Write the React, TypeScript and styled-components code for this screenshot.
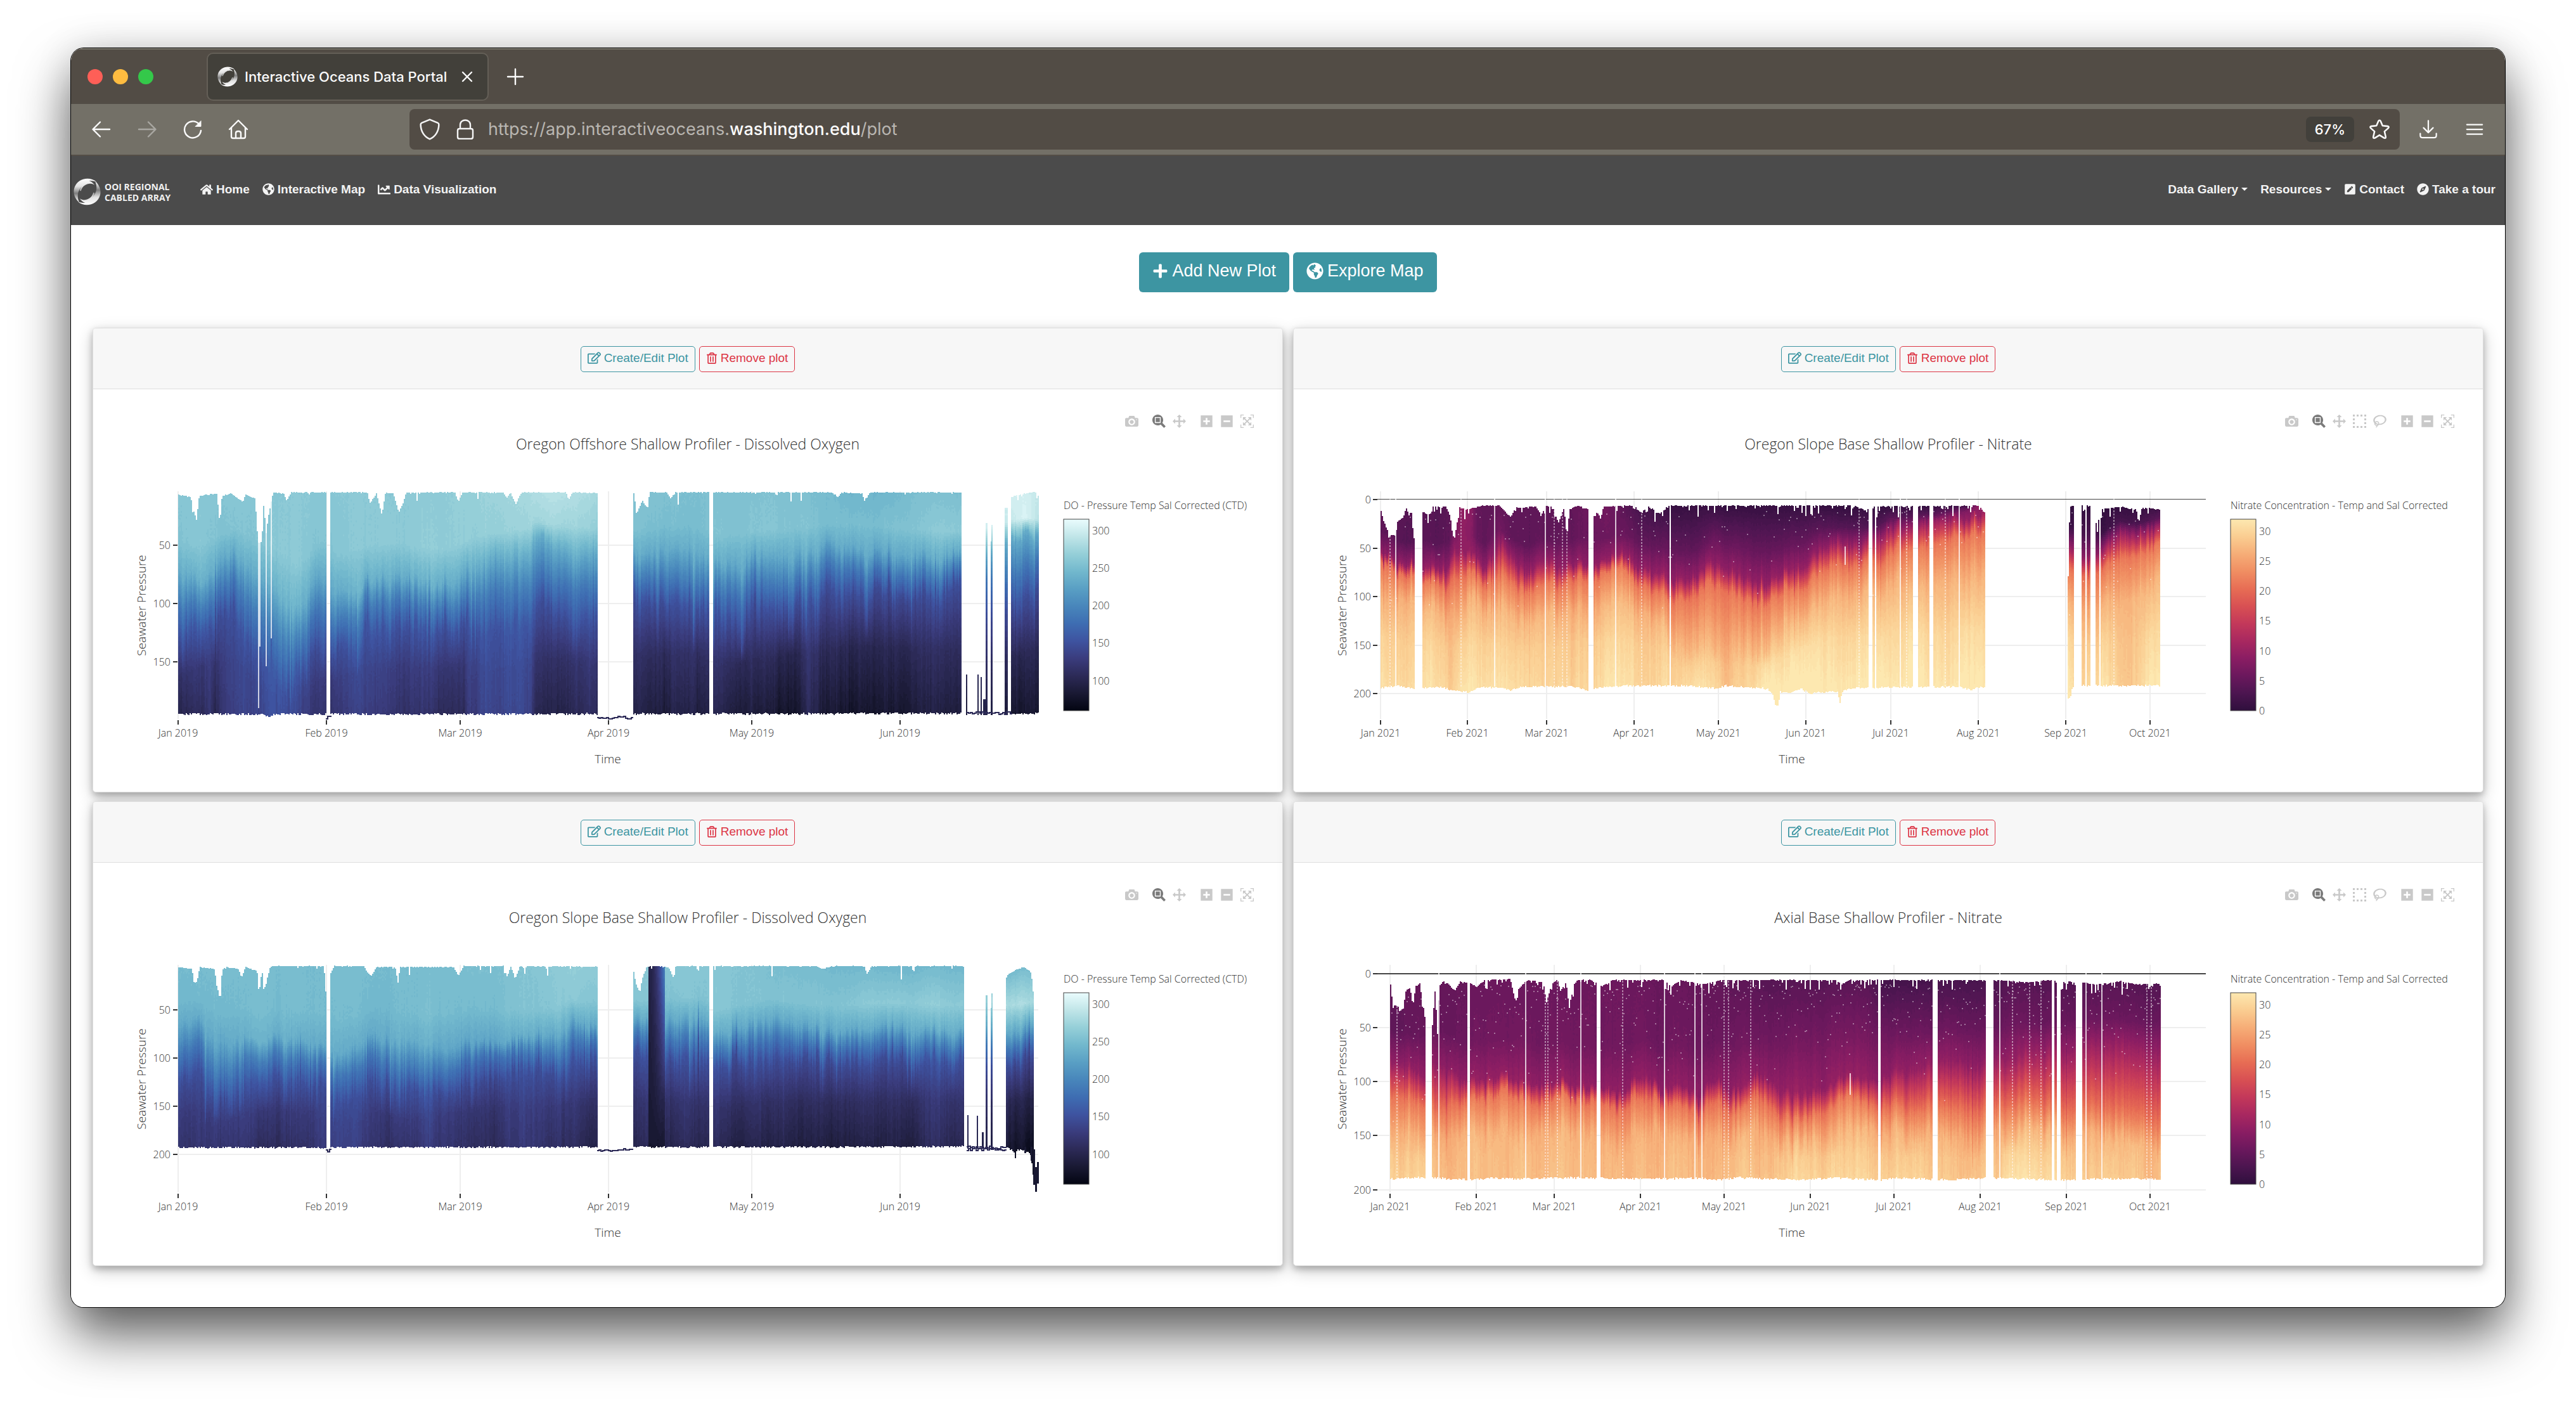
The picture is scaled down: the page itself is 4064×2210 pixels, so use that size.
import React from "react";
import styled, { createGlobalStyle, css } from "styled-components";
import {
  FaChartLine,
  FaCompass,
  FaGlobeAmericas,
  FaHome,
  FaPenSquare,
  FaPlus,
  FaRegEdit,
  FaRegTrashAlt,
} from "react-icons/fa";

/* ------------------------------------------------------------------ */
/* Global                                                              */
/* ------------------------------------------------------------------ */

const GlobalStyle = createGlobalStyle`
  *, *::before, *::after { box-sizing: border-box; }
  body { margin: 0; background: #fff; }
  button, input { font: inherit; color: inherit; }
  svg { display: block; flex: none; }
`;

const SYSTEM = `Inter, "Liberation Sans", sans-serif`;
const HELVETICA = `"Liberation Sans", Arial, sans-serif`;
const OPEN_SANS = `"Open Sans", "Noto Sans", sans-serif`;

/* ------------------------------------------------------------------ */
/* Browser window                                                      */
/* ------------------------------------------------------------------ */

const Desktop = styled.div`
  min-height: 100vh;
  padding: 76px 112px 148px;
  overflow: hidden;
`;

const Window = styled.div`
  position: relative;
  border-radius: 20px;
  overflow: hidden;
  background: #fff;
`;

const WindowShadow = styled.div`
  border-radius: 20px;
  box-shadow:
    0 0 0 1px #000,
    0 0 60px rgba(0, 0, 0, 0.12),
    0 44px 84px rgba(0, 0, 0, 0.62);
`;

const TabStrip = styled.div`
  display: flex;
  align-items: center;
  height: 88px;
  padding-left: 26px;
  background: #524c45;
  border-top: 2px solid #7d7a70;
`;

const Lights = styled.div`
  display: flex;
  gap: 16px;
  margin-right: 84px;
`;

const Light = styled.button<{ $color: string }>`
  width: 24px;
  height: 24px;
  padding: 0;
  border: 0;
  border-radius: 50%;
  background: ${(p) => p.$color};
`;

const Tab = styled.div`
  display: flex;
  align-items: center;
  height: 76px;
  width: 445px;
  padding: 0 16px 0 15px;
  gap: 11px;
  border: 2px solid #645f57;
  border-radius: 10px;
  background: #42403a;
  color: #fbfbfb;
  font: 500 22px/32px ${SYSTEM};
`;

const TabTitle = styled.span`
  flex: 1;
  white-space: nowrap;
`;

const BareButton = styled.button`
  display: flex;
  padding: 0;
  border: 0;
  background: none;
  color: #fbfbfb;
`;

const NewTab = styled(BareButton)`
  margin-left: 26px;
`;

const Toolbar = styled.div`
  display: flex;
  align-items: center;
  height: 82px;
  padding: 0 33px 0 32px;
  background: #737067;
  border-bottom: 2px solid #544e46;
`;

const NavButtons = styled.div`
  display: flex;
  gap: 40px;
  margin-right: 254px;
`;

const AddressBar = styled.div`
  display: flex;
  align-items: center;
  flex: 1;
  height: 64px;
  padding: 0 15px;
  border-radius: 8px;
  background: #524c45;
  color: #f4f4f4;
`;

const AddressIcons = styled.div`
  display: flex;
  align-items: center;
  gap: 23px;
  margin-right: 20px;
`;

const Url = styled.div`
  flex: 1;
  color: #b9b6b1;
  font: 400 27px/36px ${SYSTEM};
  white-space: nowrap;

  strong {
    color: #fbfbfb;
    font-weight: 500;
  }
`;

const ZoomBadge = styled.button`
  height: 40px;
  padding: 0 14px;
  margin-right: 23px;
  border: 0;
  border-radius: 8px;
  background: #42403b;
  color: #fff;
  font: 500 22px/40px ${SYSTEM};
`;

const ToolbarEnd = styled.div`
  display: flex;
  align-items: center;
  gap: 43px;
  margin-left: 30px;
`;

/* ------------------------------------------------------------------ */
/* Site navigation                                                     */
/* ------------------------------------------------------------------ */

const SiteNav = styled.nav`
  display: flex;
  align-items: center;
  height: 109px;
  padding: 0 15px 0 4px;
  background: #4b4b4b;
`;

const Brand = styled.a`
  display: flex;
  align-items: center;
  gap: 6px;
  width: 200px;
  padding-top: 4px;
  color: #f0f0f0;
  text-decoration: none;
  font: 700 14px/17px ${OPEN_SANS};
`;

const BrandName = styled.span`
  white-space: nowrap;
`;

const NavGroup = styled.div<{ $end?: boolean }>`
  display: flex;
  gap: 20px;
  padding-bottom: 4px;
  ${(p) => p.$end && "margin-left: auto;"}
`;

const navItem = css`
  display: flex;
  align-items: center;
  gap: 5px;
  padding: 0;
  border: 0;
  background: none;
  color: #f3f3f3;
  text-decoration: none;
  white-space: nowrap;
  font: 700 19px/28px ${HELVETICA};
`;

const NavLink = styled.a`
  ${navItem}
`;

const NavToggle = styled.button`
  ${navItem}

  &::after {
    content: "";
    border-top: 5px solid currentColor;
    border-left: 5px solid transparent;
    border-right: 5px solid transparent;
  }
`;

/* ------------------------------------------------------------------ */
/* Page                                                                */
/* ------------------------------------------------------------------ */

const Page = styled.main`
  padding: 43px 34px 65px;
`;

const Actions = styled.div`
  display: flex;
  justify-content: center;
  gap: 6px;
  margin-bottom: 56px;
`;

const PrimaryButton = styled.button`
  display: flex;
  align-items: center;
  gap: 6px;
  padding: 13px 21px 18px;
  border: 0;
  border-radius: 6px;
  background: #3d95a2;
  color: #fff;
  font: 400 27px/32px ${HELVETICA};
`;

const Grid = styled.div`
  display: grid;
  grid-template-columns: repeat(2, minmax(0, 1fr));
  gap: 14px 16px;
`;

const Card = styled.section`
  border: 1px solid #dfdfdf;
  border-radius: 5px;
  background: #fff;
  box-shadow:
    0 5px 11px rgba(0, 0, 0, 0.24),
    0 8px 27px rgba(0, 0, 0, 0.2);
`;

const CardHeader = styled.header`
  display: flex;
  justify-content: center;
  gap: 6px;
  padding: 28px 0 26px;
  border-bottom: 1px solid #dfdfdf;
  border-radius: 4px 4px 0 0;
  background: #f7f7f7;
`;

const OutlineButton = styled.button<{ $tone: string }>`
  display: flex;
  align-items: center;
  gap: 5px;
  padding: 4px 10px 8px;
  border: 1px solid ${(p) => p.$tone};
  border-radius: 5px;
  background: transparent;
  color: ${(p) => p.$tone};
  font: 400 19px/27px ${HELVETICA};
`;

const CardBody = styled.div`
  position: relative;
`;

const ModeBar = styled.div`
  position: absolute;
  top: 40px;
  right: 45px;
  display: flex;
  gap: 22px;
`;

const ModeGroup = styled.div`
  display: flex;
  gap: 11px;
`;

const ModeButton = styled.button<{ $active?: boolean }>`
  display: flex;
  padding: 0;
  border: 0;
  background: none;
  color: ${(p) => (p.$active ? "#7b7b7b" : "#c9c9c9")};
`;

const ChartSvg = styled.svg`
  width: 100%;
  height: auto;
  font-family: ${OPEN_SANS};
  font-weight: 300;
  fill: #333;
`;

const ChartTitle = styled.text`
  font-size: 23px;
  text-anchor: middle;
`;

const AxisTitle = styled.text`
  font-size: 19px;
  text-anchor: middle;
`;

const TickLabel = styled.text<{ $anchor: string }>`
  font-size: 16px;
  text-anchor: ${(p) => p.$anchor};
`;

/* ------------------------------------------------------------------ */
/* Icons                                                               */
/* ------------------------------------------------------------------ */

const lineIcon = {
  fill: "none",
  stroke: "currentColor",
  strokeWidth: 2.4,
  strokeLinecap: "round" as const,
  strokeLinejoin: "round" as const,
};

function Line({ size, d, dim }: { size: number; d: string; dim?: boolean }) {
  return (
    <svg width={size} height={size} viewBox="0 0 32 32" opacity={dim ? 0.4 : 1} {...lineIcon}>
      <path d={d} />
    </svg>
  );
}

const ICON = {
  close: "M9 9L23 23M23 9L9 23",
  plus: "M16 4V28M4 16H28",
  back: "M29 16H3M14 4.5L2.5 16L14 27.5",
  forward: "M3 16H29M18 4.5L29.5 16L18 27.5",
  home: "M2 16L16 2L30 16M5 13.5V27.5Q5 30 7.5 30H24.5Q27 30 27 27.5V13.5M12 30V22Q12 19 16 19Q20 19 20 22V30",
  shield: "M16 1.5L28 6.5Q29.5 7 29.5 9C29.5 19 24 27 16 30.5C8 27 2.5 19 2.5 9Q2.5 7 4 6.5Z",
  lock: "M7 15H25Q28 15 28 18V28Q28 31 25 31H7Q4 31 4 28V18Q4 15 7 15ZM8 15V9C8 -1 24 -1 24 9V15",
  star: "M16 2.5Q17 2.5 17.6 3.8L20.5 10.6L28 11.4Q31 12 29 14.2L23.4 19.2L25.2 27Q25.6 30 22.8 28.8L16 24.6L9.2 28.8Q6.4 30 6.8 27L8.6 19.2L3 14.2Q1 12 4 11.4L11.5 10.6L14.4 3.8Q15 2.5 16 2.5Z",
  download: "M16 1.5V21M8 13.5L16 21.5L24 13.5M2.5 23V26Q2.5 30 6.5 30H25.5Q29.5 30 29.5 26V23",
  menu: "M3 8H29M3 16H29M3 24H29",
};

function Reload() {
  return (
    <svg width={32} height={32} viewBox="0 0 32 32" {...lineIcon}>
      <path d="M26 8A13 13 0 1 0 29 18" />
      <path d="M29 3V11.5H20.5Z" fill="currentColor" strokeWidth={1} />
    </svg>
  );
}

function RingMark({ size, id }: { size: number; id: string }) {
  const crescent = "M37 6C25 -4 5 1 1 17C-1 26 3 34 9 39C6 31 6 24 10 18C15 9 26 6 34 11C31 7 28 5 25 4C30 4 34 5 37 6Z";
  return (
    <svg width={size} height={size} viewBox="0 0 44 44">
      <defs>
        <linearGradient id={id} gradientUnits="userSpaceOnUse" x1="0" y1="0" x2="0" y2="38">
          <stop offset="0" stopColor="#fff" />
          <stop offset="0.35" stopColor="#e2e2e2" />
          <stop offset="0.65" stopColor="#7c7c7c" />
          <stop offset="1" stopColor="#fff" />
        </linearGradient>
      </defs>
      <g fill={`url(#${id})`}>
        <path d={crescent} />
        <path d={crescent} transform="rotate(180 22 22)" />
        <path d="M10 20C12 11 20 7 27 9C20 9 14 13 12 21Z" />
        <path d="M10 20C12 11 20 7 27 9C20 9 14 13 12 21Z" transform="rotate(180 22 22)" />
      </g>
    </svg>
  );
}

const MODE_PATHS: Record<string, { w: number; d: string }> = {
  camera: {
    w: 1000,
    d: "m500 450c-83 0-150-67-150-150 0-83 67-150 150-150 83 0 150 67 150 150 0 83-67 150-150 150z m400 150h-120c-16 0-34 13-39 29l-31 93c-6 15-23 28-40 28h-340c-16 0-34-13-39-28l-31-94c-6-15-23-28-40-28h-120c-55 0-100-45-100-100v-450c0-55 45-100 100-100h800c55 0 100 45 100 100v450c0 55-45 100-100 100z m-400-550c-138 0-250 112-250 250 0 138 112 250 250 250 138 0 250-112 250-250 0-138-112-250-250-250z m365 380c-19 0-35 16-35 35 0 19 16 35 35 35 19 0 35-16 35-35 0-19-16-35-35-35z",
  },
  zoom: {
    w: 1000,
    d: "m1000-25l-250 251c40 63 63 138 63 218 0 224-182 406-407 406-224 0-406-182-406-406s183-406 407-406c80 0 155 22 218 62l250-250 125 125z m-812 250l0 438 437 0 0-438-437 0z m62 375l313 0 0-312-313 0 0 312z",
  },
  pan: {
    w: 1000,
    d: "m1000 350l-187 188 0-125-250 0 0 250 125 0-188 187-187-187 125 0 0-250-250 0 0 125-188-188 186-187 0 125 252 0 0-250-125 0 187-188 188 188-125 0 0 250 250 0 0-126 187 188z",
  },
  select: {
    w: 1000,
    d: "m0 850l0-143 143 0 0 143-143 0z m286 0l0-143 143 0 0 143-143 0z m285 0l0-143 143 0 0 143-143 0z m286 0l0-143 143 0 0 143-143 0z m-857-286l0-143 143 0 0 143-143 0z m857 0l0-143 143 0 0 143-143 0z m-857-285l0-143 143 0 0 143-143 0z m857 0l0-143 143 0 0 143-143 0z m-857-286l0-143 143 0 0 143-143 0z m286 0l0-143 143 0 0 143-143 0z m285 0l0-143 143 0 0 143-143 0z m286 0l0-143 143 0 0 143-143 0z",
  },
  lasso: {
    w: 1031,
    d: "m1018 538c-36 207-290 336-568 286-277-48-473-256-436-463 10-57 36-108 76-151-13-66 11-137 68-183 34-28 75-41 114-42l-55-70 0 0c-2-1-3-2-4-3-10-14-8-34 5-45 14-11 34-8 45 4 1 1 2 3 2 5l0 0 113 140c16 11 31 24 45 40 4 3 6 7 8 11 48-3 100 0 151 9 278 48 473 255 436 462z m-624-379c-80 14-149 48-197 96 42 42 109 47 156 9 33-26 47-66 41-105z m-187-74c-19 16-33 37-39 60 50-32 109-55 174-68-42-25-95-24-135 8z m360 75c-34-7-69-9-102-8 8 62-16 128-68 170-73 59-175 54-244-5-9 20-16 40-20 61-28 159 121 317 333 354s407-60 434-217c28-159-121-318-333-355z",
  },
  plus: {
    w: 875,
    d: "m1 787l0-875 875 0 0 875-875 0z m687-500l-187 0 0-187-125 0 0 187-188 0 0 125 188 0 0 187 125 0 0-187 187 0 0-125z",
  },
  minus: { w: 875, d: "m0 788l0-876 875 0 0 876-875 0z m688-500l-500 0 0 125 500 0 0-125z" },
  autoscale: {
    w: 1000,
    d: "m250 850l-187 0-63 0 0-62 0-188 63 0 0 188 187 0 0 62z m688 0l-188 0 0-62 188 0 0-188 62 0 0 188 0 62-62 0z m-875-938l0 188-63 0 0-188 0-62 63 0 187 0 0 62-187 0z m875 188l0-188-188 0 0-62 188 0 62 0 0 62 0 188-62 0z m-125 188l-1 0-93-94-156 156 156 156 92-93 2 0 0 250-250 0 0-2 93-92-156-156-156 156 94 92 0 2-250 0 0-250 0 0 93 93 157-156-157-156-93 94 0 0 0-250 250 0 0 0-94 93 156 157 156-157-93-93 0 0 250 0 0 250z",
  },
};

function ModeIcon({ name, label }: { name: string; label: string }) {
  const icon = MODE_PATHS[name];
  return (
    <ModeButton type="button" aria-label={label} $active={name === "zoom"}>
      <svg width={21} height={21} viewBox={`0 0 ${icon.w} 1000`} fill="currentColor">
        <path transform="matrix(1 0 0 -1 0 850)" d={icon.d} />
      </svg>
    </ModeButton>
  );
}

/* ------------------------------------------------------------------ */
/* Depth sections                                                      */
/* ------------------------------------------------------------------ */

type RGB = [number, number, number];

const ICE: RGB[] = [
  [3, 5, 18], [25, 25, 51], [44, 42, 87], [58, 60, 125], [62, 83, 160], [62, 109, 178],
  [72, 134, 187], [89, 159, 196], [114, 184, 205], [149, 207, 216], [192, 229, 232], [234, 252, 253],
];
const MATTER: RGB[] = [
  [47, 15, 61], [76, 21, 80], [107, 24, 93], [138, 29, 99], [168, 40, 96], [195, 56, 90],
  [216, 80, 83], [231, 109, 84], [240, 142, 98], [246, 173, 119], [250, 205, 145], [253, 232, 176],
];

/** day, near-surface value, mixed-layer value, three isoline pressures, value at depth */
type Key = number[];

interface Section {
  title: string;
  seed: number;
  ramp: RGB[];
  jitter: number;
  ragged: number;
  speckle: number;
  surface: number;
  floor: number;
  lastDay: number;
  levels: [number, number, number];
  keys: Key[];
  tops: [number, number][];
  bottoms: [number, number][];
  gaps: [number, number][];
  cuts: number[];
  dotted?: number[];
  scars?: [number, number, number][];
  spikes?: [number, number, number][];
  trace?: [number, number, number][];
  stripe?: [number, number, number, number];
  tail?: string;
  x0: number;
  perDay: number;
  y0: number;
  perBar: number;
  left: number;
  right: number;
  yTicks: number[];
  months: [string, number][];
  zeroLine?: number;
  timeX: number;
  barX: number;
  barTitle: string;
  barTicks: [string, number][];
  tools: string[][];
}

function rng(seed: number) {
  let s = seed;
  return () => {
    s = (s * 1664525 + 1013904223) % 4294967296;
    return s / 4294967296;
  };
}

function mix(ramp: RGB[], t: number) {
  const f = Math.max(0, Math.min(1, t)) * (ramp.length - 1);
  const i = Math.min(ramp.length - 2, Math.floor(f));
  const k = f - i;
  const c = ramp[i].map((v, n) => Math.round(v + (ramp[i + 1][n] - v) * k));
  return `rgb(${c.join(",")})`;
}

function at(points: number[][], x: number, col = 1) {
  if (x <= points[0][0]) return points[0][col];
  for (let i = 1; i < points.length; i++) {
    if (x <= points[i][0]) {
      const a = points[i - 1];
      const b = points[i];
      return a[col] + ((b[col] - a[col]) * (x - a[0])) / (b[0] - a[0] || 1);
    }
  }
  return points[points.length - 1][col];
}

const SHADES = 56;
const COL = 2;
const CELL = 3;

function buildSection(s: Section) {
  const rand = rng(s.seed);
  const gauss = () => rand() + rand() + rand() - 1.5;
  const paths: string[] = Array.from({ length: SHADES }, () => "");
  const specks: string[] = [];
  const px = (day: number) => s.x0 + day * s.perDay;
  const py = (p: number) => s.y0 + p * s.perBar;

  const column = (x: number, width: number, top: number, bottom: number, shift: number, lift: number) => {
    const day = (x - s.x0) / s.perDay;
    const [, n, m, a, b, c, d] = [0, 1, 2, 3, 4, 5, 6].map((k) => at(s.keys, day, k));
    const mid = c + (s.floor - c) * 0.45;
    const curve = [
      [s.surface, n],
      [a * 0.62, m],
      [a + shift * 0.8, s.levels[0]],
      [b + shift, s.levels[1]],
      [c + shift * 1.4, s.levels[2]],
      [Math.max(mid, c + shift * 1.4 + 8), s.levels[2] + (d - s.levels[2]) * 0.65],
      [s.floor, d],
    ];
    let runStart = Math.round(py(top));
    const end = Math.round(py(bottom));
    let shade = -1;
    for (let y = runStart; y < end; y += CELL) {
      const p = (y - s.y0) / s.perBar;
      const depthWeight = Math.min(1, p / s.floor + 0.1);
      let t = at(curve, p) + lift * depthWeight + (rand() - 0.5) * 0.008;
      if (s.stripe && day > s.stripe[0] && day < s.stripe[1]) {
        const k = (day - s.stripe[0]) / (s.stripe[1] - s.stripe[0]);
        const cap = s.stripe[2] + (s.stripe[3] - s.stripe[2]) * k * k;
        t = Math.min(t - 0.08, cap - (p / s.floor) * (cap - 0.08));
      }
      const next = Math.max(0, Math.min(SHADES - 1, Math.round(t * (SHADES - 1))));
      if (next !== shade) {
        if (shade >= 0) paths[shade] += `M${x} ${runStart}h${width}V${y}h-${width}z`;
        shade = next;
        runStart = y;
      }
    }
    if (shade >= 0) paths[shade] += `M${x} ${runStart}h${width}V${end}h-${width}z`;
  };

  let slow = 0;
  let drift = 0;
  let fine = 0;
  let bump = 0;
  const startX = Math.round(px(0));
  const endX = Math.round(px(s.lastDay));
  for (let x = startX; x < endX; x += COL) {
    const day = (x - s.x0) / s.perDay;
    slow = slow * 0.92 + gauss() * 0.015;
    drift = drift * 0.9 + gauss() * s.jitter * 0.35;
    fine = fine * 0.4 + gauss() * s.jitter;
    bump = rand() < 0.09 ? (rand() - 0.45) * s.jitter * 3.5 : bump * 0.5;
    const drop = rand() < s.ragged ? rand() * rand() * 14 : 0;
    const inGap = s.gaps.some(([g0, g1]) => day >= g0 && day <= g1);
    const bottom = at(s.bottoms, day) + (rand() - 0.5) * 2;
    const top = at(s.tops, day) + drop + (rand() - 0.5) * 0.8;
    if (!inGap) column(x, COL, top, bottom, fine + drift + bump, slow + gauss() * 0.014);
    if (!inGap && rand() < s.speckle) {
      const sp = top + 4 + rand() * rand() * 110;
      specks.push(`M${x} ${Math.round(py(sp))}h2v2h-2z`);
    }
  }
  (s.spikes || []).forEach(([day, top, width]) => {
    column(Math.round(px(day)), width, top, s.floor + 1, 0, 0);
  });

  const traces = (s.trace || []).map(([from, to, p]) => {
    let d = "";
    for (let x = Math.round(px(from)); x < px(to); x += 3) {
      d += `${d ? "L" : "M"}${x} ${Math.round(py(p) + (rand() - 0.5) * 4)}h3`;
    }
    return d;
  });

  return { paths, specks: specks.join(""), traces };
}

const TOP = 161;
const BOTTOM = 520;
const BAR_TOP = 205;
const BAR_HEIGHT = 302;

function SectionChart({ s, id }: { s: Section; id: string }) {
  const built = React.useMemo(() => buildSection(s), [s]);
  const px = (day: number) => Math.round(s.x0 + day * s.perDay);
  const py = (p: number) => Math.round(s.y0 + p * s.perBar);
  return (
    <ChartSvg viewBox="0 0 1876 635" role="img" aria-label={s.title}>
      <defs>
        <linearGradient id={id} x1="0" y1="1" x2="0" y2="0">
          {s.ramp.map((c, i) => (
            <stop key={i} offset={i / (s.ramp.length - 1)} stopColor={`rgb(${c.join(",")})`} />
          ))}
        </linearGradient>
      </defs>
      <ChartTitle x={938} y={95}>
        {s.title}
      </ChartTitle>

      <g shapeRendering="crispEdges">
        {s.months.map(([m, day]) => (
          <rect key={m} x={px(day) - 1} y={TOP} width={2} height={BOTTOM - TOP} fill="#eee" />
        ))}
        {s.yTicks.filter((t) => t > 0).map((t) => (
          <rect key={t} x={s.left} y={py(t) - 1} width={s.right - s.left} height={2} fill="#eee" />
        ))}
        {s.zeroLine && (
          <rect x={s.left} y={py(0) - 1} width={s.right - s.left} height={s.zeroLine} fill="#444" />
        )}
        {built.paths.map((d, i) => (d ? <path key={i} d={d} fill={mix(s.ramp, i / (SHADES - 1))} /> : null))}
        {built.traces.map((d, i) => (
          <path key={i} d={d} fill="none" stroke="#2c2a57" strokeWidth={2} />
        ))}
        {s.tail && <path d={s.tail} fill="none" stroke="#191933" strokeWidth={3} />}
        {s.cuts.map((day) => (
          <rect key={day} x={px(day)} y={TOP + 10} width={2} height={py(s.floor) - TOP - 10} fill="#fff" fillOpacity={0.75} />
        ))}
        {(s.dotted || []).map((day) => (
          <path
            key={day}
            d={`M${px(day) + 1} ${TOP + 10}V${py(s.floor)}`}
            stroke="#fff"
            strokeOpacity={0.45}
            strokeWidth={2}
            strokeDasharray="3 2"
          />
        ))}
        {(s.scars || []).map(([day, from, to]) => (
          <rect key={day} x={px(day)} y={py(from)} width={2} height={py(to) - py(from)} fill="#fff" fillOpacity={0.75} />
        ))}
        <path d={built.specks} fill="#fff" fillOpacity={0.4} />
      </g>

      <g shapeRendering="crispEdges">
        {s.months.map(([m, day]) => (
          <rect key={m} x={px(day) - 1} y={522} width={2} height={7} />
        ))}
        {s.yTicks.map((t) => (
          <rect key={t} x={s.left - 7} y={py(t) - 1} width={7} height={2} />
        ))}
      </g>
      {s.months.map(([m, day]) => (
        <TickLabel key={m} $anchor="middle" x={px(day)} y={548}>
          {m}
        </TickLabel>
      ))}
      {s.yTicks.map((t) => (
        <TickLabel key={t} $anchor="end" x={122} y={py(t) + 6}>
          {t}
        </TickLabel>
      ))}
      <AxisTitle x={s.timeX} y={590}>
        Time
      </AxisTitle>
      <AxisTitle transform="translate(83 341) rotate(-90)">Seawater Pressure</AxisTitle>

      <TickLabel $anchor="start" x={s.barX} y={189}>
        {s.barTitle}
      </TickLabel>
      <rect x={s.barX} y={BAR_TOP} width={40} height={BAR_HEIGHT} fill={`url(#${id})`} stroke="#444" strokeWidth={1} />
      {s.barTicks.map(([label, y]) => (
        <TickLabel key={label} $anchor="start" x={s.barX + 45} y={y + 6}>
          {label}
        </TickLabel>
      ))}
    </ChartSvg>
  );
}

const OXYGEN = {
  ramp: ICE,
  jitter: 7,
  ragged: 0.06,
  speckle: 0,
  surface: 4,
  levels: [0.68, 0.5, 0.35] as [number, number, number],
  cuts: [] as number[],
  x0: 134,
  perDay: 7.54,
  left: 133,
  right: 1491,
  months: [
    ["Jan 2019", 0], ["Feb 2019", 31], ["Mar 2019", 59], ["Apr 2019", 90], ["May 2019", 120], ["Jun 2019", 151],
  ] as [string, number][],
  timeX: 812,
  barX: 1531,
  barTitle: "DO - Pressure Temp Sal Corrected (CTD)",
  barTicks: [["300", 223], ["250", 282], ["200", 341], ["150", 400], ["100", 460]] as [string, number][],
  tools: [["camera"], ["zoom", "pan"], ["plus", "minus", "autoscale"]],
};

const NITRATE = {
  ramp: MATTER,
  jitter: 6,
  ragged: 0.3,
  surface: 5,
  levels: [0.3, 0.66, 0.84] as [number, number, number],
  left: 132,
  right: 1439,
  months: [
    ["Jan 2021", 0], ["Feb 2021", 31], ["Mar 2021", 59], ["Apr 2021", 90], ["May 2021", 120],
    ["Jun 2021", 151], ["Jul 2021", 181], ["Aug 2021", 212], ["Sep 2021", 243], ["Oct 2021", 273],
  ] as [string, number][],
  timeX: 786,
  barX: 1478,
  barTitle: "Nitrate Concentration - Temp and Sal Corrected",
  barTicks: [
    ["30", 224], ["25", 271], ["20", 318], ["15", 365], ["10", 413], ["5", 460], ["0", 507],
  ] as [string, number][],
  tools: [["camera"], ["zoom", "pan", "select", "lasso"], ["plus", "minus", "autoscale"]],
};

const SECTIONS: Section[] = [
  {
    ...OXYGEN,
    title: "Oregon Offshore Shallow Profiler - Dissolved Oxygen",
    seed: 11,
    floor: 195,
    lastDay: 180,
    y0: 153.6,
    perBar: 1.841,
    yTicks: [50, 100, 150],
    keys: [
      [0, 0.78, 0.77, 75, 104, 135, 0.16], [5, 0.78, 0.77, 78, 98, 118, 0.14], [6.5, 0.78, 0.77, 72, 95, 118, 0.24],
      [7.5, 0.78, 0.77, 70, 92, 118, 0.14], [9, 0.78, 0.77, 62, 88, 112, 0.26], [12, 0.78, 0.77, 55, 78, 108, 0.28],
      [17, 0.78, 0.77, 75, 110, 150, 0.3], [20, 0.78, 0.77, 85, 120, 158, 0.3], [25, 0.79, 0.78, 105, 132, 158, 0.27],
      [30, 0.79, 0.78, 72, 102, 140, 0.25], [33, 0.79, 0.78, 92, 118, 142, 0.25], [38, 0.79, 0.78, 82, 100, 126, 0.25],
      [45, 0.79, 0.79, 75, 95, 120, 0.22], [55, 0.8, 0.8, 85, 104, 124, 0.17], [59.5, 0.82, 0.81, 75, 98, 118, 0.18],
      [61, 0.82, 0.81, 70, 95, 120, 0.26], [65, 0.83, 0.81, 64, 92, 128, 0.29], [72, 0.85, 0.82, 58, 86, 118, 0.27],
      [73.6, 0.86, 0.83, 56, 84, 116, 0.25], [74.2, 0.87, 0.83, 46, 76, 106, 0.15], [78, 0.9, 0.85, 52, 82, 108, 0.15],
      [83, 0.88, 0.84, 54, 78, 110, 0.17], [87, 0.86, 0.82, 57, 86, 116, 0.2], [95, 0.77, 0.76, 60, 80, 100, 0.14],
      [100, 0.77, 0.75, 54, 78, 100, 0.13], [107, 0.75, 0.74, 50, 78, 98, 0.12], [112, 0.76, 0.76, 62, 84, 106, 0.12],
      [116, 0.76, 0.77, 64, 88, 116, 0.14], [120, 0.77, 0.78, 60, 82, 108, 0.13], [125, 0.77, 0.78, 58, 84, 106, 0.1],
      [130, 0.76, 0.77, 54, 76, 96, 0.08], [132, 0.75, 0.76, 54, 76, 98, 0.15], [136, 0.74, 0.75, 50, 72, 96, 0.1],
      [140, 0.72, 0.75, 50, 68, 90, 0.08], [146, 0.72, 0.75, 52, 70, 88, 0.1], [150, 0.73, 0.77, 56, 74, 90, 0.11],
      [155, 0.76, 0.78, 58, 76, 94, 0.13], [160, 0.76, 0.8, 60, 76, 92, 0.12], [164, 0.75, 0.79, 60, 74, 90, 0.11],
      [169, 0.98, 0.94, 58, 78, 108, 0.14], [174, 0.96, 0.92, 46, 76, 105, 0.1], [177, 0.95, 0.97, 42, 72, 102, 0.09],
      [180, 0.92, 0.9, 44, 66, 92, 0.1],
    ],
    tops: [
      [0, 7], [2.5, 9], [3.7, 29], [4.3, 8], [8, 6], [8.5, 27], [9.1, 8], [11, 6], [13.4, 13], [14, 7], [16, 10],
      [16.6, 48], [17.4, 47], [17.8, 14], [18.3, 40], [18.8, 25], [19.4, 12], [19.8, 5], [22, 6], [22.6, 12], [23.5, 5],
      [39.5, 5], [40, 14], [41.4, 6], [42.5, 24], [43.3, 5], [45, 6], [46, 22], [47, 14], [47.6, 5], [57.8, 5],
      [58.5, 13], [59.4, 5], [68, 5], [68.6, 10], [69.4, 5], [70.5, 15], [71.7, 5], [81, 5], [81.6, 11], [82.4, 5],
      [95.3, 6], [95.8, 24], [97, 12], [98, 18], [98.6, 5], [102, 5], [103, 10], [104, 5], [136.7, 5], [138, 9],
      [138.8, 5], [143, 6], [143.5, 12], [144.6, 6], [145, 5], [164, 5], [174, 9], [176, 7], [178, 5], [180, 5],
    ],
    bottoms: [[0, 195], [17, 195], [19, 197.5], [20, 195], [180, 194.5]],
    gaps: [[30.9, 31.7], [87.7, 95], [110.9, 111.8], [163.9, 174.2]],
    scars: [[16.7, 48, 190], [17, 47, 137], [18.3, 30, 154], [19.3, 12, 130]],
    spikes: [
      [164.9, 161, 2], [167.3, 161, 2], [167.9, 163, 2], [168.4, 182, 4], [169, 31, 3], [170, 47, 3], [170.2, 33, 2],
      [173, 18, 5],
    ],
    trace: [[30.9, 31.8, 198], [87.7, 95, 198], [165, 174.2, 194]],
  },
  {
    ...NITRATE,
    title: "Oregon Slope Base Shallow Profiler - Nitrate",
    seed: 23,
    speckle: 0.35,
    floor: 193,
    lastDay: 276.7,
    x0: 136.5,
    perDay: 4.4487,
    y0: 174.4,
    perBar: 1.528,
    yTicks: [0, 50, 100, 150, 200],
    zeroLine: 1,
    keys: [
      [0, 0.14, 0.14, 53, 63, 100, 0.98], [4, 0.14, 0.14, 55, 64, 98, 0.97], [6, 0.13, 0.13, 66, 78, 105, 0.97],
      [11, 0.12, 0.12, 70, 82, 110, 0.96], [15, 0.13, 0.13, 66, 80, 106, 0.97], [20, 0.11, 0.12, 72, 86, 115, 0.95],
      [24, 0.14, 0.15, 68, 90, 122, 0.95], [26, 0.2, 0.22, 50, 78, 118, 0.96], [29, 0.3, 0.3, 50, 76, 112, 1],
      [32, 0.28, 0.26, 58, 78, 108, 1], [34, 0.16, 0.18, 64, 84, 110, 0.98], [37, 0.14, 0.15, 72, 90, 120, 0.97],
      [42, 0.16, 0.2, 46, 80, 115, 0.98], [46, 0.14, 0.15, 62, 90, 128, 0.95], [52, 0.14, 0.14, 76, 96, 130, 0.93],
      [57, 0.14, 0.15, 62, 86, 120, 0.92], [62, 0.14, 0.15, 68, 90, 122, 0.93], [66, 0.15, 0.16, 66, 84, 115, 0.95],
      [72, 0.18, 0.18, 60, 74, 108, 0.96], [80, 0.2, 0.18, 62, 74, 108, 0.97], [86, 0.13, 0.17, 56, 70, 106, 0.95],
      [92, 0.07, 0.15, 68, 85, 115, 0.94], [100, 0.03, 0.15, 75, 94, 125, 0.93], [107, 0.02, 0.15, 84, 105, 158, 0.93],
      [112, 0.03, 0.15, 80, 100, 150, 0.99], [118, 0.03, 0.18, 62, 84, 145, 0.96], [123, 0.02, 0.17, 70, 92, 158, 0.88],
      [130, 0.02, 0.17, 80, 102, 150, 0.93], [137, 0.02, 0.16, 86, 106, 152, 1], [143, 0.02, 0.16, 76, 96, 135, 1],
      [150, 0.02, 0.15, 66, 88, 120, 1], [156, 0.02, 0.14, 48, 70, 104, 1], [163, 0.01, 0.12, 44, 68, 102, 1],
      [172, 0.01, 0.11, 44, 66, 98, 1], [177, 0.01, 0.11, 40, 72, 106, 1], [181, 0.01, 0.14, 28, 52, 88, 1],
      [188, 0.02, 0.12, 27, 50, 90, 1], [193, 0.01, 0.14, 24, 50, 92, 1], [197, 0.02, 0.16, 24, 50, 95, 1],
      [203, 0.03, 0.22, 20, 42, 86, 1], [208, 0.05, 0.25, 18, 36, 85, 1], [212, 0.3, 0.3, 14, 36, 85, 1],
      [243, 0.01, 0.04, 45, 66, 98, 1], [247, 0.01, 0.06, 45, 68, 104, 0.98], [249, 0.01, 0.1, 58, 76, 112, 0.97],
      [254, 0.01, 0.1, 58, 78, 122, 0.98], [256, 0.01, 0.03, 52, 74, 110, 1], [258, 0.01, 0.05, 45, 66, 105, 0.97],
      [262, 0.01, 0.08, 34, 60, 110, 0.9], [268, 0.01, 0.08, 38, 60, 105, 0.9], [272, 0.02, 0.1, 34, 56, 100, 0.97],
      [277, 0.03, 0.15, 28, 46, 80, 1],
    ],
    tops: [
      [0, 10], [1, 22], [2, 28], [3, 36], [5.2, 37], [6, 22], [8, 18], [9, 8], [10, 16], [10.8, 10], [12, 45],
      [14.9, 12], [17, 16], [18.5, 7], [23, 7], [24.5, 15], [26, 42], [28, 8], [31, 10], [36, 6], [42, 6], [44, 12],
      [46, 18], [48, 8], [55, 7], [57, 16], [58.5, 6], [61, 8], [63, 24], [65, 8], [66, 38], [67, 10], [70, 6],
      [77, 14], [78, 20], [79, 7], [90, 6], [92, 13], [95, 7], [99, 14], [102, 6], [168, 6], [172, 11], [174, 7],
      [212, 6], [243.5, 118], [244.3, 7], [246, 6], [252, 6], [254, 28], [255.4, 10], [262, 7], [268, 10], [269, 20],
      [270, 8], [277, 10],
    ],
    bottoms: [
      [0, 194], [6, 192], [12, 195], [20, 193], [25, 196], [31, 199], [36, 193], [42, 194], [46, 197], [50, 193],
      [70, 193], [73, 198], [76, 194], [85, 192], [110, 192], [119, 195], [122, 192], [137, 195], [139, 200],
      [140, 212], [141, 212], [141.6, 198], [146, 199], [149, 195], [152, 200], [159, 198], [162, 198], [162.8, 211],
      [163.6, 198], [168, 194], [205, 193], [209, 196], [214, 193], [243.4, 205], [244.6, 205], [245, 196], [246, 192],
      [277, 192],
    ],
    gaps: [
      [12, 14.8], [73.5, 75.4], [102.2, 102.8], [173.1, 174.1], [175, 175.8], [188.9, 190.3], [194.4, 196.1],
      [214.2, 243.4], [246, 248.5], [249.9, 250.5], [251.8, 253.4], [254.7, 255.4],
    ],
    cuts: [5.2, 40.3, 58.3, 83.2, 184.2, 205.2],
    dotted: [3.2, 28.4, 61.5, 64.5, 66, 92.6, 169.7, 186.4, 200.1, 260],
    scars: [[164.6, 48, 67]],
  },
  {
    ...OXYGEN,
    title: "Oregon Slope Base Shallow Profiler - Dissolved Oxygen",
    seed: 37,
    floor: 193,
    lastDay: 179,
    y0: 155.4,
    perBar: 1.523,
    yTicks: [50, 100, 150, 200],
    keys: [
      [0, 0.74, 0.73, 66, 100, 130, 0.25], [4, 0.74, 0.73, 60, 86, 120, 0.24], [9, 0.75, 0.74, 85, 122, 150, 0.27],
      [14, 0.74, 0.73, 74, 95, 125, 0.22], [17, 0.74, 0.73, 85, 104, 125, 0.14], [20, 0.74, 0.73, 76, 95, 120, 0.17],
      [25, 0.74, 0.74, 80, 100, 125, 0.2], [30, 0.74, 0.74, 85, 102, 126, 0.27], [33, 0.75, 0.74, 95, 116, 145, 0.3],
      [37, 0.75, 0.74, 92, 116, 148, 0.3], [41, 0.74, 0.73, 72, 92, 122, 0.24], [46, 0.74, 0.73, 82, 110, 135, 0.2],
      [50, 0.74, 0.74, 86, 114, 138, 0.23], [56, 0.75, 0.75, 85, 108, 130, 0.27], [61, 0.76, 0.75, 78, 95, 125, 0.24],
      [68, 0.76, 0.76, 80, 92, 115, 0.24], [75, 0.78, 0.77, 78, 95, 116, 0.24], [79, 0.8, 0.79, 76, 98, 118, 0.22],
      [82, 0.81, 0.79, 60, 82, 108, 0.18], [86, 0.81, 0.78, 68, 84, 108, 0.17], [95, 0.79, 0.78, 64, 82, 104, 0.16],
      [103, 0.79, 0.77, 60, 82, 106, 0.17], [110, 0.78, 0.77, 58, 80, 104, 0.16], [112, 0.78, 0.78, 76, 94, 114, 0.16],
      [115, 0.78, 0.78, 76, 96, 114, 0.16], [120, 0.77, 0.77, 64, 84, 108, 0.15], [125, 0.75, 0.77, 60, 80, 106, 0.16],
      [130, 0.75, 0.78, 66, 84, 104, 0.16], [138, 0.73, 0.77, 72, 88, 106, 0.13], [145, 0.73, 0.8, 68, 84, 104, 0.15],
      [151, 0.72, 0.8, 68, 86, 104, 0.14], [158, 0.73, 0.8, 70, 86, 104, 0.16], [164, 0.72, 0.79, 72, 88, 104, 0.15],
      [169, 0.85, 0.82, 66, 86, 108, 0.14], [173, 0.7, 0.86, 72, 88, 104, 0.1], [176, 0.74, 0.88, 70, 86, 102, 0.09],
      [179, 0.74, 0.86, 66, 82, 100, 0.05],
    ],
    tops: [
      [0, 6], [2.8, 8], [3.2, 22], [3.8, 22], [4.4, 6], [7.5, 8], [8, 25], [8.7, 40], [9.1, 8], [10, 6], [12.5, 8],
      [13.1, 17], [14, 6], [16.4, 10], [16.8, 34], [17.4, 10], [18.1, 28], [18.7, 14], [19.2, 5], [30.4, 5],
      [30.8, 33], [31.8, 12], [32.6, 5], [38.8, 5], [39.5, 12], [40.3, 15], [41.4, 6], [45.3, 6], [45.9, 22],
      [46.3, 6], [57.5, 6], [58.5, 15], [59.6, 5], [68, 5], [68.7, 16], [69.5, 5], [70.4, 18], [71.4, 5], [95, 6],
      [95.8, 25], [96.5, 32], [97, 18], [98, 5], [102.5, 6], [103.6, 18], [104, 5], [133.5, 5], [134.5, 8],
      [137, 5], [143.4, 5], [144, 13], [145, 5], [164.4, 5], [173, 20], [173.4, 14], [175, 9], [177, 6],
      [178.4, 12], [179, 42],
    ],
    bottoms: [[0, 193], [173, 192], [174.8, 197], [175, 205], [175.4, 196], [177, 195], [178.3, 200], [179, 230]],
    gaps: [[30.9, 31.7], [87.7, 95], [110.9, 111.8], [164.3, 173]],
    spikes: [
      [165.1, 159, 2], [167.1, 160, 2], [168.2, 177, 3], [169, 35, 3], [170, 48, 3], [170.2, 33, 2],
    ],
    stripe: [98.2, 101.6, 0.14, 0.52],
    trace: [[30.9, 31.8, 196], [87.7, 95, 195.5], [165, 173, 193], [165, 173, 195]],
    tail: "M1470 448V458M1480 448V470M1484 452V508M1487 480V519M1486 496H1490M1490 472V506",
  },
  {
    ...NITRATE,
    title: "Axial Base Shallow Profiler - Nitrate",
    seed: 51,
    speckle: 0.9,
    floor: 190,
    lastDay: 276.6,
    x0: 152,
    perDay: 4.392,
    y0: 174.8,
    perBar: 1.704,
    yTicks: [0, 50, 100, 150, 200],
    zeroLine: 2,
    keys: [
      [0, 0.15, 0.14, 80, 112, 150, 0.93], [5, 0.16, 0.16, 86, 116, 150, 0.92], [12, 0.17, 0.17, 92, 118, 152, 0.93],
      [16, 0.17, 0.18, 82, 124, 150, 0.9], [22, 0.17, 0.18, 87, 118, 150, 0.88], [26, 0.17, 0.18, 100, 122, 150, 0.87],
      [30, 0.17, 0.19, 98, 116, 150, 0.86], [40, 0.18, 0.2, 96, 113, 152, 0.86], [49, 0.17, 0.2, 97, 112, 150, 0.87],
      [53, 0.18, 0.2, 105, 124, 150, 0.88], [60, 0.18, 0.2, 101, 114, 152, 0.87], [66, 0.18, 0.2, 108, 122, 155, 0.86],
      [76, 0.19, 0.2, 104, 118, 152, 0.87], [85, 0.19, 0.2, 103, 118, 152, 0.87], [92, 0.18, 0.2, 94, 115, 150, 0.87],
      [97, 0.17, 0.19, 112, 126, 154, 0.87], [103, 0.17, 0.2, 101, 118, 150, 0.88], [110, 0.17, 0.19, 110, 128, 154, 0.87],
      [117, 0.16, 0.19, 97, 116, 150, 0.88], [125, 0.14, 0.2, 108, 126, 152, 0.89], [133, 0.13, 0.2, 94, 116, 150, 0.9],
      [140, 0.12, 0.2, 105, 130, 154, 0.9], [150, 0.12, 0.21, 110, 132, 154, 0.92], [160, 0.13, 0.22, 98, 118, 150, 0.93],
      [166, 0.13, 0.22, 95, 114, 148, 0.93], [172, 0.12, 0.22, 103, 126, 150, 0.93], [177, 0.07, 0.21, 96, 124, 150, 0.94],
      [188, 0.07, 0.18, 88, 126, 152, 0.92], [200, 0.08, 0.19, 80, 123, 152, 0.9], [210, 0.08, 0.18, 82, 124, 154, 0.91],
      [217, 0.1, 0.18, 78, 122, 148, 0.94], [225, 0.12, 0.18, 74, 120, 146, 0.96], [235, 0.12, 0.17, 72, 126, 150, 0.95],
      [243, 0.11, 0.17, 70, 126, 152, 0.92], [252, 0.12, 0.18, 64, 124, 150, 0.92], [262, 0.12, 0.18, 66, 132, 158, 0.89],
      [270, 0.11, 0.17, 70, 134, 160, 0.87], [277, 0.11, 0.17, 70, 136, 162, 0.86],
    ],
    tops: [
      [0, 10], [1, 34], [2, 20], [3, 35], [4.5, 33], [5.5, 16], [7, 13], [8, 30], [9, 12], [10.5, 9], [11.5, 28],
      [12.6, 42], [15, 48], [16, 14], [17, 64], [17.4, 12], [19, 7], [21, 10], [23, 16], [25, 7], [28.5, 9],
      [31, 12], [34, 6], [43, 5], [44.5, 22], [46, 14], [49, 6], [55, 8], [56, 26], [58, 9], [60, 6], [61, 16],
      [63, 8], [64.5, 26], [66, 10], [67, 6], [72, 6], [76, 12], [80, 6], [98, 6], [101, 12], [104, 6], [113, 10],
      [118, 6], [160, 6], [162, 10], [165, 6], [218, 6], [229, 8], [236, 6], [255, 10], [262, 7], [268, 10], [277, 9],
    ],
    bottoms: [
      [0, 190], [6, 189], [14, 189], [30, 191], [35, 189], [45, 190], [60, 189], [100, 190], [110, 189], [118, 191],
      [125, 189], [150, 191], [158, 189], [176, 191], [182, 189], [200, 191], [215, 189], [240, 191], [255, 190], [277, 190],
    ],
    gaps: [
      [12.6, 15], [27.6, 28.5], [73.8, 75.5], [175.3, 176], [194.7, 196.5], [214, 216.5], [237.6, 238.4],
      [239.5, 240.5], [246, 248.4],
    ],
    cuts: [17.2, 48.4, 68.4, 98.3, 109.3, 111.7, 218.7, 249.7, 255.5],
    dotted: [2.2, 55.5, 56.5, 59.8, 83.4, 119.7, 121.4, 129.4, 223.3, 229.6, 233.6, 271.6, 273.2],
    scars: [[165, 92, 112]],
  },
];

const TOOL_LABELS: Record<string, string> = {
  camera: "Download plot as a png",
  zoom: "Zoom",
  pan: "Pan",
  select: "Box Select",
  lasso: "Lasso Select",
  plus: "Zoom in",
  minus: "Zoom out",
  autoscale: "Autoscale",
};

function PlotCard({ section, index }: { section: Section; index: number }) {
  return (
    <Card>
      <CardHeader>
        <OutlineButton type="button" $tone="#3d95a2">
          <FaRegEdit size={21} />
          Create/Edit Plot
        </OutlineButton>
        <OutlineButton type="button" $tone="#dc3545">
          <FaRegTrashAlt size={18} />
          Remove plot
        </OutlineButton>
      </CardHeader>
      <CardBody>
        <SectionChart s={section} id={`scale-${index}`} />
        <ModeBar>
          {section.tools.map((group, i) => (
            <ModeGroup key={i}>
              {group.map((name) => (
                <ModeIcon key={name} name={name} label={TOOL_LABELS[name]} />
              ))}
            </ModeGroup>
          ))}
        </ModeBar>
      </CardBody>
    </Card>
  );
}

/* ------------------------------------------------------------------ */
/* App                                                                 */
/* ------------------------------------------------------------------ */

export default function App() {
  return (
    <>
      <GlobalStyle />
      <Desktop>
        <WindowShadow>
          <Window>
            <TabStrip>
              <Lights>
                <Light type="button" aria-label="Close" $color="#fe5f57" />
                <Light type="button" aria-label="Minimize" $color="#febc40" />
                <Light type="button" aria-label="Zoom window" $color="#34c84a" />
              </Lights>
              <Tab>
                <RingMark size={32} id="tab-mark" />
                <TabTitle>Interactive Oceans Data Portal</TabTitle>
                <BareButton type="button" aria-label="Close tab">
                  <Line size={32} d={ICON.close} />
                </BareButton>
              </Tab>
              <NewTab type="button" aria-label="New tab">
                <Line size={32} d={ICON.plus} />
              </NewTab>
            </TabStrip>

            <Toolbar>
              <NavButtons>
                <BareButton type="button" aria-label="Back">
                  <Line size={32} d={ICON.back} />
                </BareButton>
                <BareButton type="button" aria-label="Forward">
                  <Line size={32} d={ICON.forward} dim />
                </BareButton>
                <BareButton type="button" aria-label="Reload">
                  <Reload />
                </BareButton>
                <BareButton type="button" aria-label="Home">
                  <Line size={32} d={ICON.home} />
                </BareButton>
              </NavButtons>
              <AddressBar>
                <AddressIcons>
                  <Line size={34} d={ICON.shield} />
                  <Line size={32} d={ICON.lock} />
                </AddressIcons>
                <Url>
                  https://app.interactiveoceans.<strong>washington.edu</strong>/plot
                </Url>
                <ZoomBadge type="button">67%</ZoomBadge>
                <BareButton type="button" aria-label="Bookmark this page">
                  <Line size={34} d={ICON.star} />
                </BareButton>
              </AddressBar>
              <ToolbarEnd>
                <BareButton type="button" aria-label="Downloads">
                  <Line size={30} d={ICON.download} />
                </BareButton>
                <BareButton type="button" aria-label="Menu">
                  <Line size={30} d={ICON.menu} />
                </BareButton>
              </ToolbarEnd>
            </Toolbar>

            <SiteNav>
              <Brand href="#">
                <RingMark size={43} id="brand-mark" />
                <BrandName>
                  OOI REGIONAL
                  <br />
                  CABLED ARRAY
                </BrandName>
              </Brand>
              <NavGroup>
                <NavLink href="#">
                  <FaHome size={20} />
                  Home
                </NavLink>
                <NavLink href="#">
                  <FaGlobeAmericas size={19} />
                  Interactive Map
                </NavLink>
                <NavLink href="#">
                  <FaChartLine size={20} />
                  Data Visualization
                </NavLink>
              </NavGroup>
              <NavGroup $end>
                <NavToggle type="button">Data Gallery</NavToggle>
                <NavToggle type="button">Resources</NavToggle>
                <NavLink href="#">
                  <FaPenSquare size={19} />
                  Contact
                </NavLink>
                <NavLink href="#">
                  <FaCompass size={19} />
                  Take a tour
                </NavLink>
              </NavGroup>
            </SiteNav>

            <Page>
              <Actions>
                <PrimaryButton type="button">
                  <FaPlus size={25} />
                  Add New Plot
                </PrimaryButton>
                <PrimaryButton type="button">
                  <FaGlobeAmericas size={27} />
                  Explore Map
                </PrimaryButton>
              </Actions>
              <Grid>
                {SECTIONS.map((section, i) => (
                  <PlotCard key={section.title} section={section} index={i} />
                ))}
              </Grid>
            </Page>
          </Window>
        </WindowShadow>
      </Desktop>
    </>
  );
}
